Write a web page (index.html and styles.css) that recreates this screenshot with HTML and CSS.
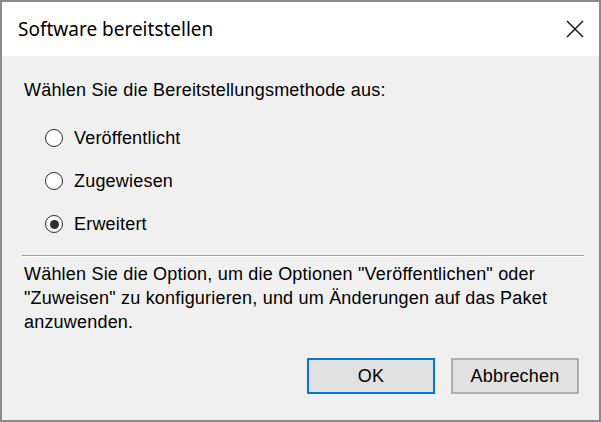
FILE: index.html
```html
<!DOCTYPE html>
<html>
<head>
<meta charset="utf-8">
<link rel="stylesheet" href="styles.css">
</head>
<body>
<div class="window">
  <div class="titlebar">
    <span class="title">Software bereitstellen</span>
    <svg class="close" width="18" height="18" viewBox="0 0 18 18"><path d="M1 1 L17 17 M17 1 L1 17" stroke="#1a1a1a" stroke-width="1.5" fill="none"/></svg>
  </div>
  <div class="content">
    <div class="prompt">Wählen Sie die Bereitstellungsmethode aus:</div>
    <div class="options">
      <div class="option"><span class="radio"></span><span>Veröffentlicht</span></div>
      <div class="option"><span class="radio"></span><span>Zugewiesen</span></div>
      <div class="option"><span class="radio checked"></span><span>Erweitert</span></div>
    </div>
    <div class="separator"></div>
    <p class="desc">Wählen Sie die Option, um die Optionen "Veröffentlichen" oder<br>"Zuweisen" zu konfigurieren, und um Änderungen auf das Paket<br>anzuwenden.</p>
    <div class="buttons">
      <button class="btn default">OK</button>
      <button class="btn">Abbrechen</button>
    </div>
  </div>
</div>
</body>
</html>
```
FILE: styles.css
```css
html, body {
  margin: 0;
  padding: 0;
  background: #f0f0f0;
}
.window {
  width: 601px;
  height: 422px;
  box-sizing: border-box;
  border: 2px solid #8b8b8b;
  background: #f0f0f0;
  display: flex;
  flex-direction: column;
  font-family: "Liberation Sans", Arial, sans-serif;
  font-size: 18px;
  letter-spacing: 0.2px;
  color: #000;
}
.titlebar {
  height: 54px;
  background: #fff;
  display: flex;
  align-items: center;
  justify-content: space-between;
  padding: 0 15px 0 16px;
}
.title {
  font-family: "Noto Sans", "Open Sans", sans-serif;
  font-size: 19px;
  letter-spacing: 0;
  color: #000;
}
.close {
  display: block;
}
.content {
  flex: 1;
  padding: 0 0 0 22px;
  display: flex;
  flex-direction: column;
}
.prompt {
  margin-top: 24px;
  line-height: 20px;
}
.options {
  display: flex;
  flex-direction: column;
  gap: 23px;
  margin-top: 28px;
  padding-left: 21px;
}
.option {
  display: flex;
  align-items: center;
  gap: 11px;
  height: 20px;
  line-height: 20px;
}
.radio {
  width: 18px;
  height: 18px;
  box-sizing: border-box;
  border: 1.7px solid #2b2b2b;
  border-radius: 50%;
  background: #fff;
  display: flex;
  align-items: center;
  justify-content: center;
}
.radio.checked::after {
  content: "";
  width: 9px;
  height: 9px;
  border-radius: 50%;
  background: #2b2b2b;
}
.separator {
  margin-top: 21px;
  width: 562px;
  margin-left: -2px;
  height: 1px;
  background: #a0a0a0;
  border-bottom: 1px solid #fff;
}
.desc {
  margin: 5px 0 0 0;
  line-height: 24px;
}
.buttons {
  display: flex;
  gap: 16px;
  justify-content: flex-end;
  padding-right: 20px;
  margin-top: 24px;
}
.btn {
  width: 128px;
  height: 36px;
  box-sizing: border-box;
  border: 2px solid #adadad;
  background: #e1e1e1;
  font-family: "Liberation Sans", Arial, sans-serif;
  font-size: 18px;
  letter-spacing: 0.2px;
  color: #000;
  padding: 0;
}
.btn.default {
  border-color: #0078d7;
}
```
